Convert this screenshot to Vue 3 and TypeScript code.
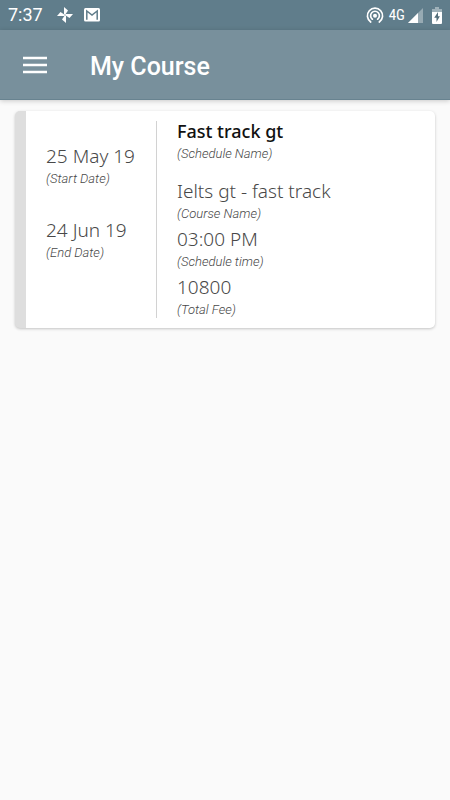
<script setup lang="ts">
interface Entry {
  label: string
  value: string
  strong?: boolean
}

const dates: Entry[] = [
  { label: 'Start Date', value: '25 May 19' },
  { label: 'End Date', value: '24 Jun 19' },
]

const details: Entry[] = [
  { label: 'Schedule Name', value: 'Fast track gt', strong: true },
  { label: 'Course Name', value: 'Ielts gt - fast track' },
  { label: 'Schedule time', value: '03:00 PM' },
  { label: 'Total Fee', value: '10800' },
]
</script>

<template>
  <div class="screen">
    <div class="status">
      <span class="clock">7:37</span>
      <svg class="pinwheel" width="16" height="16" viewBox="0 0 16 16" aria-hidden="true">
        <g fill="#fff">
          <path d="M7 0L11 3.500L8.300 7.600H7Z" />
          <path d="M16 7L12.500 11L8.400 8.300V7Z" />
          <path d="M9 16L5 12.500L7.700 8.400H9Z" />
          <path d="M0 9L3.500 5L7.600 7.700V9Z" />
        </g>
      </svg>
      <svg class="mail" width="16" height="14" viewBox="0 0 16 14" aria-hidden="true">
        <rect width="16" height="13.500" rx="1.500" fill="#fff" />
        <path d="M2.800 11.700V3L8 7L13.200 3V11.700" fill="none" stroke="#607d8b" stroke-width="1.500" />
      </svg>
      <span class="spacer"></span>
      <svg class="hotspot" width="18" height="17" viewBox="0 0 18 17" aria-hidden="true">
        <g fill="none" stroke="#fff" stroke-width="1.700" stroke-linecap="round">
          <path d="M4.700 15A7.600 7.600 0 1 1 13.300 15" />
          <path d="M6.400 12.200A4.400 4.400 0 1 1 11.600 12.200" />
        </g>
        <circle cx="9" cy="8.800" r="2" fill="#fff" />
      </svg>
      <span class="network">4G</span>
      <svg class="signal" width="15" height="15" viewBox="0 0 15 15" aria-hidden="true">
        <path d="M0 15L15 0V15Z" fill="#fff" opacity=".35" />
        <path d="M0 15L10 5V15Z" fill="#fff" />
      </svg>
      <svg class="battery" width="10" height="17" viewBox="0 0 10 17" aria-hidden="true">
        <path d="M3 0H7V2H10V5H0V2H3Z" fill="#fff" opacity=".4" />
        <path d="M0 5H10V16Q10 17 9 17H1Q0 17 0 16Z" fill="#fff" />
        <path d="M6 5L2.200 10.800H4.500V15L7.900 9.200H6Z" fill="#546e7a" />
      </svg>
    </div>

    <header class="bar">
      <button class="menu" type="button" aria-label="Menu">
        <svg width="24" height="18" viewBox="0 0 24 18" aria-hidden="true">
          <path d="M0 2H24M0 9H24M0 16H24" stroke="#fff" stroke-width="2.500" />
        </svg>
      </button>
      <h1>My Course</h1>
    </header>

    <main>
      <article class="card">
        <dl class="dates">
          <div v-for="item in dates" :key="item.label" class="entry">
            <dd>{{ item.value }}</dd>
            <dt>({{ item.label }})</dt>
          </div>
        </dl>
        <dl class="details">
          <div v-for="item in details" :key="item.label" class="entry" :class="{ strong: item.strong }">
            <dd>{{ item.value }}</dd>
            <dt>({{ item.label }})</dt>
          </div>
        </dl>
      </article>
    </main>
  </div>
</template>

<style>
body {
  background: #fafafa;
}
</style>

<style scoped>
.screen {
  min-height: 100vh;
  background: #fafafa;
  font-family: Roboto, sans-serif;
}

.status {
  display: flex;
  align-items: center;
  box-sizing: border-box;
  height: 30px;
  padding: 0 8px;
  background: #607d8b;
  color: #fff;
}

.clock {
  font-size: 18px;
  line-height: 30px;
}

.pinwheel {
  margin-left: 14px;
}

.mail {
  margin-left: 11px;
}

.spacer {
  flex: 1;
}

.network {
  margin: 0 3px 0 5px;
  font-family: "Roboto Condensed", Roboto, sans-serif;
  font-size: 15px;
}

.battery {
  margin-left: 9px;
}

.bar {
  display: flex;
  align-items: center;
  box-sizing: border-box;
  height: 70px;
  padding: 2px 23px 0;
  gap: 43px;
  background: #78909c;
  border-bottom: 1px solid #688390;
  box-shadow: 0 1px 5px rgba(0, 0, 0, 0.2);
}

.menu {
  display: flex;
  padding: 0 0 2px;
  border: 0;
  background: none;
}

h1 {
  margin: 0;
  color: #fff;
  font-size: 25px;
  font-weight: 500;
  line-height: 32px;
  padding-top: 2px;
}

main {
  padding: 11px 15px;
}

.card {
  display: flex;
  box-sizing: border-box;
  padding: 8px 0;
  border-left: 11px solid #dedede;
  border-radius: 5px;
  background: #fff;
  box-shadow: 0 1px 3px rgba(0, 0, 0, 0.22);
}

dl {
  margin: 0;
}

.dates {
  display: flex;
  flex-direction: column;
  gap: 29px;
  box-sizing: border-box;
  width: 131px;
  margin: 2px 0;
  padding: 23px 0 0 20px;
  border-right: 1px solid #d2d2d2;
}

.details {
  display: flex;
  flex: 1;
  flex-direction: column;
  gap: 3px;
  padding-left: 20px;
}

.strong {
  margin-bottom: 12px;
}

dd {
  margin: 0;
  color: #484848;
  font-family: "Noto Sans", sans-serif;
  font-size: 19px;
  font-weight: 300;
  line-height: 24px;
  white-space: nowrap;
}

.strong dd {
  color: #111;
  font-size: 18px;
  font-weight: 500;
}

dt {
  color: #484848;
  font-size: 13px;
  font-style: italic;
  font-weight: 300;
  line-height: 21px;
}
</style>
